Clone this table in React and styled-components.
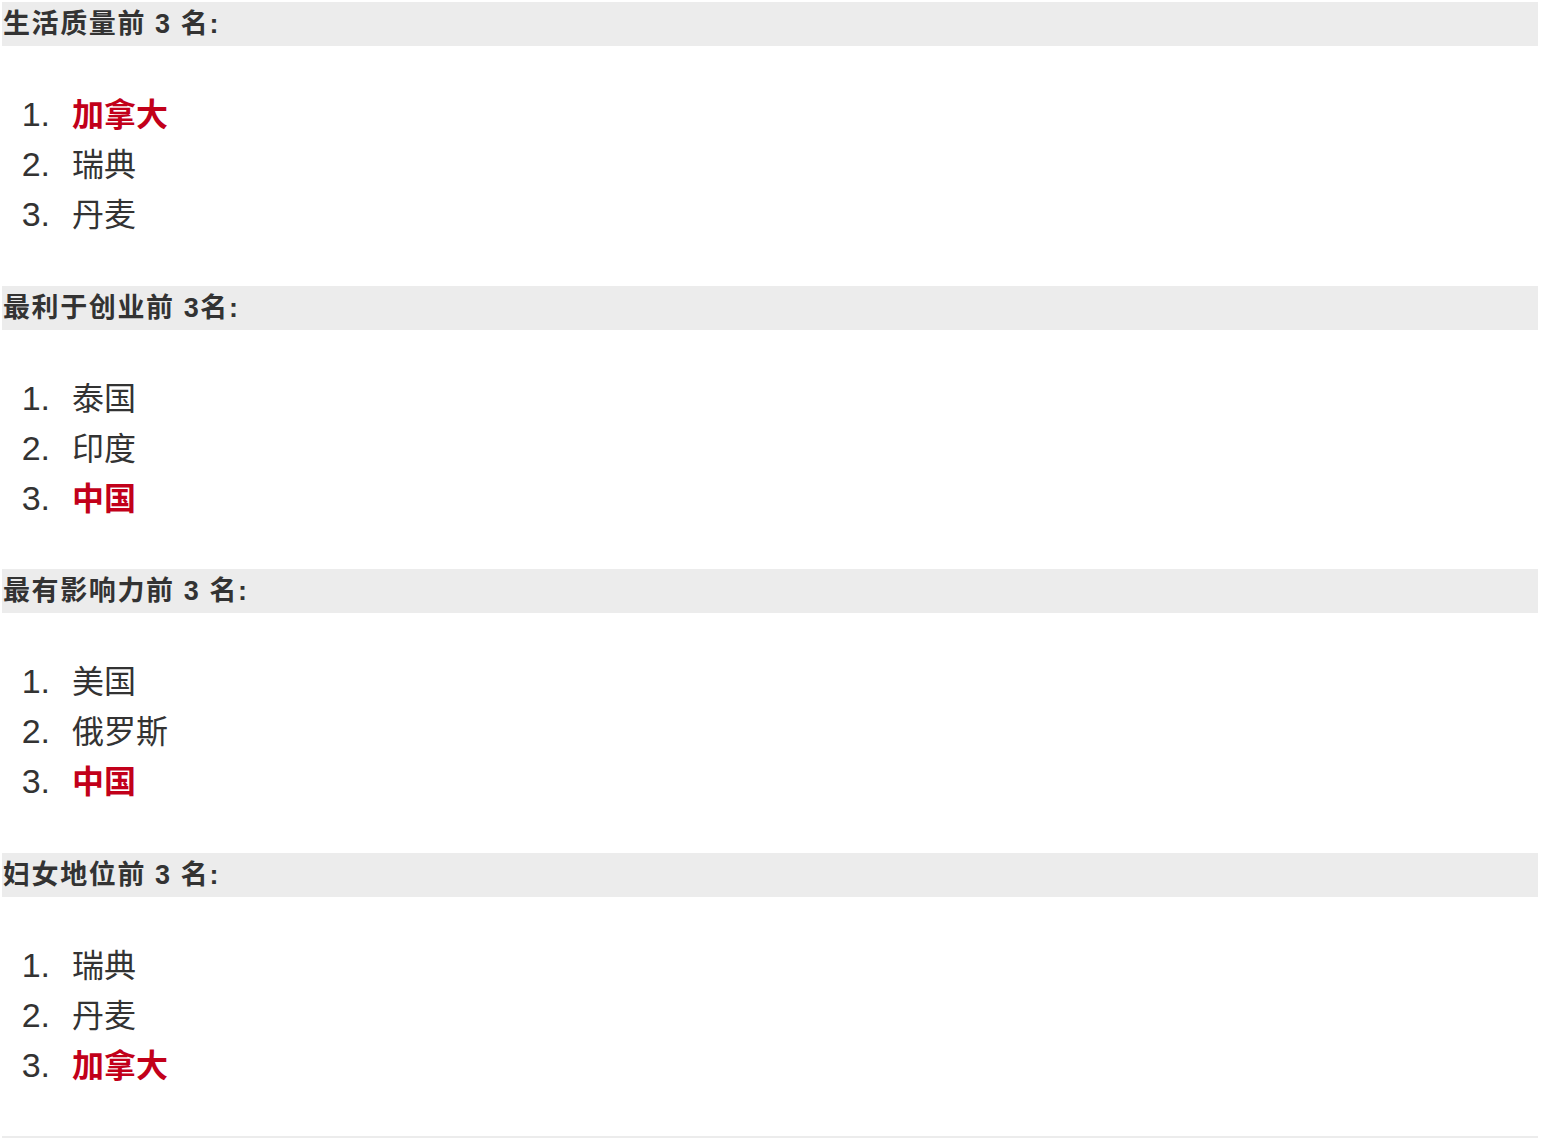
import React from 'react';
import styled, { createGlobalStyle } from 'styled-components';

const GlobalStyle = createGlobalStyle`
  html, body {
    margin: 0;
    padding: 0;
    background: #fff;
  }
`

const Page = styled.div`
  box-sizing: border-box;
  width: 1546px;
  padding: 2px 8px 0 2px;
  font-family: 'Liberation Sans', 'Noto Sans CJK SC', sans-serif;
  color: #333;
`

const Heading = styled.h3`
  margin: 0;
  height: 44px;
  line-height: 44px;
  padding-left: 1px;
  background: #ececec;
  font-size: 27px;
  font-weight: bold;
  letter-spacing: 1.6px;
  color: #333;
`

const List = styled.ol`
  list-style: none;
  margin: 0;
  padding: 44px 0 45.5px;
`

const Item = styled.li`
  display: grid;
  grid-template-columns: 48px 1fr;
  column-gap: 22px;
  align-items: baseline;
  height: 50px;
  line-height: 49px;
  font-size: 32px;
`

const Num = styled.span`
  text-align: right;
  font-size: 34px;
  color: #333;
`

const Name = styled.span`
  color: ${p => (p.$hl ? '#c2001a' : '#333')};
  font-weight: ${p => (p.$hl ? 'bold' : 'normal')};
`

const Divider = styled.div`
  height: 4px;
  background: #ececec;
`

const sections = [
  { title: '生活质量前 3 名:', items: [['加拿大', true], ['瑞典'], ['丹麦']] },
  { title: '最利于创业前 3名:', items: [['泰国'], ['印度'], ['中国', true]] },
  { title: '最有影响力前 3 名:', items: [['美国'], ['俄罗斯'], ['中国', true]] },
  { title: '妇女地位前 3 名:', items: [['瑞典'], ['丹麦'], ['加拿大', true]] },
]

const App = () => {
  return (
    <Page>
      <GlobalStyle />
      {sections.map(s => (
        <section key={s.title}>
          <Heading>{s.title}</Heading>
          <List>
            {s.items.map(([name, hl], i) => (
              <Item key={name}>
                <Num>{i + 1}.</Num>
                <Name $hl={hl}>{name}</Name>
              </Item>
            ))}
          </List>
        </section>
      ))}
      <Divider />
    </Page>
  )
}

export default App;
